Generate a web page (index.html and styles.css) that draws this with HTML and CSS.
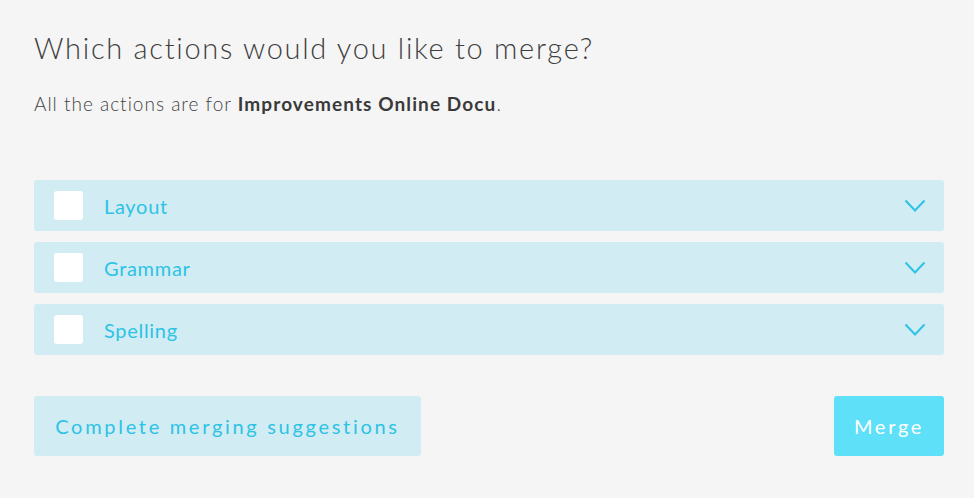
FILE: index.html
```html
<!DOCTYPE html>
<html>
<head>
<meta charset="utf-8">
<link rel="stylesheet" href="styles.css">
</head>
<body>
<div class="page">
  <h1 class="title">Which actions would you like to merge?</h1>
  <p class="subtitle">All the actions are for <strong>Improvements Online Docu</strong>.</p>
  <div class="list">
    <div class="row"><span class="check"></span><span class="label">Layout</span><svg class="chev" width="22" height="14" viewBox="0 0 22 14"><path d="M1.5 1.5 L11 11.5 L20.5 1.5" fill="none" stroke="#2cc3e6" stroke-width="2"/></svg></div>
    <div class="row"><span class="check"></span><span class="label">Grammar</span><svg class="chev" width="22" height="14" viewBox="0 0 22 14"><path d="M1.5 1.5 L11 11.5 L20.5 1.5" fill="none" stroke="#2cc3e6" stroke-width="2"/></svg></div>
    <div class="row"><span class="check"></span><span class="label">Spelling</span><svg class="chev" width="22" height="14" viewBox="0 0 22 14"><path d="M1.5 1.5 L11 11.5 L20.5 1.5" fill="none" stroke="#2cc3e6" stroke-width="2"/></svg></div>
  </div>
  <div class="actions">
    <button class="btn btn-secondary">Complete merging suggestions</button>
    <button class="btn btn-primary">Merge</button>
  </div>
</div>
</body>
</html>
```
FILE: styles.css
```css
html, body {
  margin: 0;
  padding: 0;
  background: #f5f5f5;
}
body {
  font-family: Lato, "Open Sans", sans-serif;
  color: #444;
}
.page {
  padding: 26px 30px 0 34px;
}
.title {
  margin: 0;
  font-size: 29px;
  font-weight: 300;
  line-height: 44px;
  letter-spacing: 1.7px;
  color: #3e3e3e;
}
.subtitle {
  margin: 22px 0 0;
  font-size: 19px;
  font-weight: 300;
  line-height: 24px;
  letter-spacing: 1px;
  color: #444;
}
.subtitle strong {
  font-weight: 700;
  letter-spacing: 1.1px;
  color: #3a3a3a;
}
.list {
  margin-top: 64px;
  display: flex;
  flex-direction: column;
  gap: 11px;
}
.row {
  height: 51px;
  background: #d2ecf3;
  border-radius: 3px;
  display: flex;
  align-items: center;
  padding: 0 18px 0 20px;
}
.check {
  width: 29px;
  height: 29px;
  background: #fff;
  border-radius: 3px;
  flex: none;
}
.label {
  margin-left: 21px;
  font-size: 20px;
  font-weight: 400;
  letter-spacing: 0.7px;
  color: #2cc3e6;
  flex: 1;
}
.chev {
  flex: none;
}
.actions {
  margin-top: 41px;
  display: flex;
  justify-content: space-between;
}
.btn {
  height: 60px;
  border: none;
  border-radius: 3px;
  font-family: Lato, "Open Sans", sans-serif;
  font-size: 20px;
  font-weight: 400;
  letter-spacing: 2.7px;
  padding: 0;
}
.btn-secondary {
  width: 387px;
  background: #d2ecf3;
  color: #2cc3e6;
}
.btn-primary {
  width: 110px;
  background: #5de0f8;
  color: #fff;
}
```
